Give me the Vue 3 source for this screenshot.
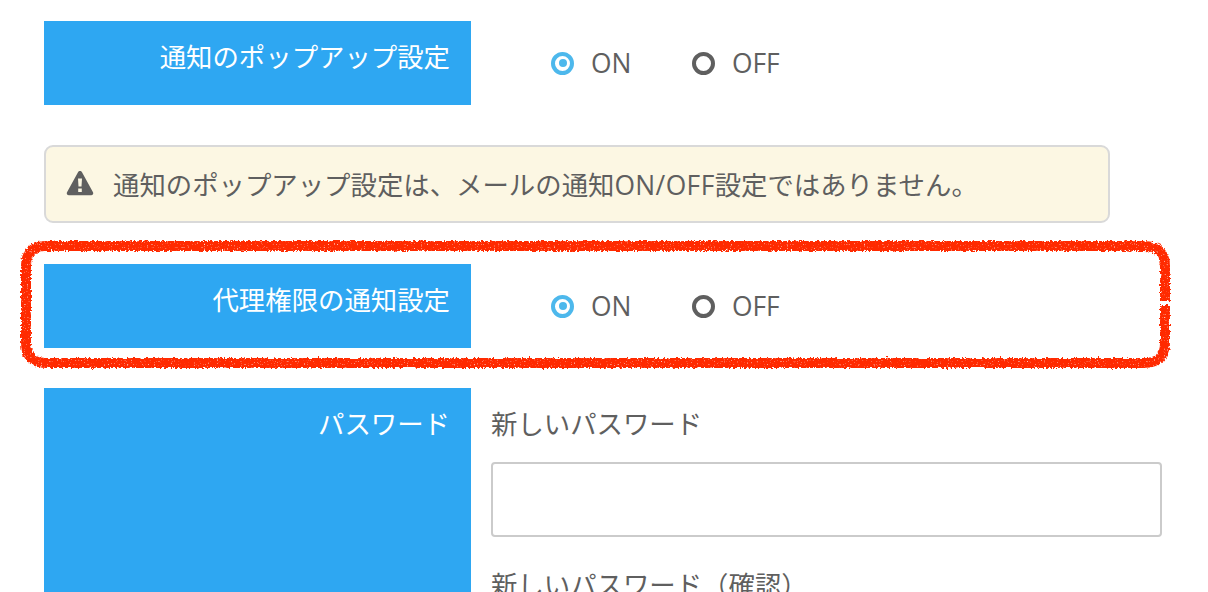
<script setup>
const toggleRows = {
  popup: '通知のポップアップ設定',
  proxy: '代理権限の通知設定',
}
</script>

<template>
  <div class="page">
    <section class="row first">
      <div class="label">{{ toggleRows.popup }}</div>
      <div class="radios">
        <span class="radio"><span class="dot on"></span>ON</span>
        <span class="radio"><span class="dot"></span>OFF</span>
      </div>
    </section>

    <div class="notice">
      <svg class="warn" viewBox="0 0 28 26" width="28" height="26">
        <path fill-rule="evenodd" fill="#5f5f5f" d="M14 1c.9 0 1.6.5 2 1.2l11 20c.8 1.500-.2 3-1.900 3H2.900c-1.700 0-2.700-1.500-1.900-3l11-20C12.400 1.500 13.100 1 14 1zM12 8.500l.5 8h3l.5-8zM12.200 18.500v3.500h3.600v-3.500z" />
      </svg>
      <span>通知のポップアップ設定は、メールの通知<span class="latin">ON/OFF</span>設定ではありません。</span>
    </div>

    <section class="row">
      <div class="label">{{ toggleRows.proxy }}</div>
      <div class="radios">
        <span class="radio"><span class="dot on"></span>ON</span>
        <span class="radio"><span class="dot"></span>OFF</span>
      </div>
    </section>

    <section class="row password">
      <div class="label tall">パスワード</div>
      <div class="fields">
        <label class="field-label">新しいパスワード</label>
        <input class="input" type="password" />
        <label class="field-label second">新しいパスワード（確認）</label>
      </div>
    </section>

    <svg class="scribble" viewBox="0 0 1208 592" width="1208" height="592">
      <defs>
        <filter id="rough" x="-2%" y="-10%" width="104%" height="120%">
          <feTurbulence type="fractalNoise" baseFrequency="0.45" numOctaves="2" seed="4" result="n" />
          <feDisplacementMap in="SourceGraphic" in2="n" scale="5" xChannelSelector="R" yChannelSelector="G" result="d" />
          <feTurbulence type="fractalNoise" baseFrequency="0.7" numOctaves="1" seed="9" result="m" />
          <feColorMatrix in="m" type="matrix" values="0 0 0 0 0  0 0 0 0 0  0 0 0 0 0  0 0 0 -4 3.500" result="mask" />
          <feComposite in="d" in2="mask" operator="in" result="speck" />
          <feGaussianBlur in="speck" stdDeviation="0.5" />
        </filter>
      </defs>
      <path class="scribble-line" filter="url(#rough)"
        d="M1165 301 L1165 267 Q1165 246 1144 246 L46 246 Q26 246 26 266 L26 343 Q26 363 46 363 L1144 363 Q1165 363 1165 343 L1165 305" />
    </svg>
  </div>
</template>

<style scoped>
.page {
  position: relative;
  width: 1208px;
  height: 592px;
  overflow: hidden;
  background: #fff;
  box-sizing: border-box;
  padding: 21px 46px 0 44px;
  font-family: "Open Sans", "Noto Sans CJK JP", sans-serif;
  font-size: 26.4px;
  color: #5f5f5f;
}
.row {
  display: flex;
  align-items: stretch;
}
.label {
  flex: 0 0 427px;
  height: 84px;
  box-sizing: border-box;
  padding: 18px 21px 0 0;
  background: #2ea7f2;
  color: #fff;
  text-align: right;
  line-height: 37px;
  white-space: nowrap;
}
.label.tall {
  height: 260px;
}
.radios {
  display: flex;
  align-items: center;
  gap: 60.500px;
  padding-left: 80px;
}
.radio {
  display: inline-flex;
  align-items: center;
  gap: 17px;
  line-height: 1;
}
.dot {
  position: relative;
  width: 23px;
  height: 23px;
  box-sizing: border-box;
  border: 4px solid #5f5f5f;
  border-radius: 50%;
}
.dot.on {
  border-color: #4db8ec;
}
.dot.on::after {
  content: "";
  position: absolute;
  inset: 3.500px;
  border-radius: 50%;
  background: #4db8ec;
}
.notice {
  display: flex;
  align-items: center;
  gap: 19px;
  width: 1066px;
  height: 78px;
  box-sizing: border-box;
  margin: 40px 0 41px;
  padding: 0 20px 2px;
  background: #fcf7e3;
  border: 2px solid #d9d9d9;
  border-radius: 9px;
  white-space: nowrap;
}
.latin {
  letter-spacing: 0.4px;
}
.warn {
  flex: none;
}
.password {
  margin-top: 40px;
}
.fields {
  flex: 1;
  padding-left: 20px;
}
.field-label {
  display: block;
  line-height: 37px;
  padding-top: 18px;
}
.field-label.second {
  padding-top: 30px;
}
.input {
  display: block;
  width: 100%;
  height: 75px;
  box-sizing: border-box;
  margin-top: 19px;
  border: 2px solid #cbcbcb;
  border-radius: 4px;
  background: #fff;
  outline: none;
}
.scribble {
  position: absolute;
  left: 0;
  top: 0;
  pointer-events: none;
}
.scribble-line {
  fill: none;
  stroke: #ff2a00;
  stroke-width: 10;
  stroke-linecap: butt;
}
</style>
